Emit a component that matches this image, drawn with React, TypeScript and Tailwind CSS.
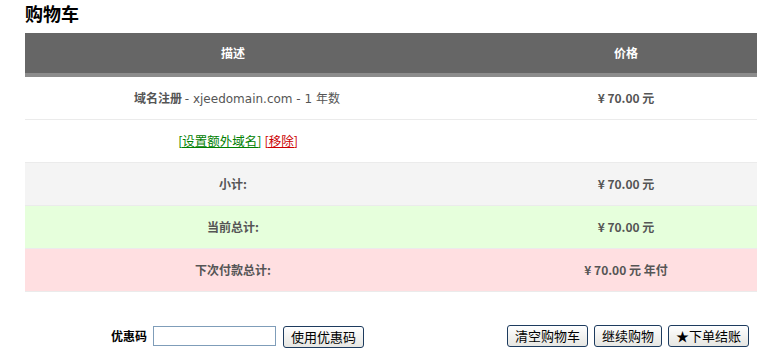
const cjk = { fontFamily: '"Noto Sans CJK SC", "Liberation Sans", sans-serif' };
const latin = { fontFamily: 'Verdana, "DejaVu Sans", "Noto Sans CJK SC", sans-serif' };

function Btn({ children }: { children: React.ReactNode }) {
  return (
    <button
      className="h-[22px] shrink-0 whitespace-nowrap rounded-[3px] border border-[#1d3b5e] bg-gradient-to-b from-white to-[#e6e6e2] px-[7px] text-[13px] leading-[20px] text-black"
      style={cjk}
    >
      {children}
    </button>
  );
}

function Row({
  left,
  right,
  bg = "bg-white",
}: {
  left: React.ReactNode;
  right?: React.ReactNode;
  bg?: string;
}) {
  return (
    <div className={`flex h-[43px] items-center border-b border-[#ebebeb] text-[12px] text-[#555] ${bg}`}>
      <div className="flex w-[416px] items-center justify-center">{left}</div>
      <div className="flex flex-1 items-center justify-center font-bold">{right}</div>
    </div>
  );
}

export default function App() {
  return (
    <div className="h-[353px] w-[757px] overflow-hidden bg-white" style={cjk}>
      <div className="w-[811px] pl-[25px]">
        <h1 className="h-[33px] pt-[1px] text-[18px] font-bold leading-[24px] text-black">购物车</h1>
        <div className="w-[786px]">
          <div className="flex h-[44px] items-center border-b-[4px] border-[#8c8c8c] bg-[#666666] text-[12px] font-bold text-white">
            <div className="w-[416px] text-center">描述</div>
            <div className="flex-1 text-center">价格</div>
          </div>
          <Row
            left={
              <span className="pl-[8px]">
                <b>域名注册</b> <span style={latin}>- xjeedomain.com - 1 </span>年数
              </span>
            }
            right={<span>¥ 70.00 元</span>}
          />
          <Row
            left={
              <span className="pl-[10px] text-[12.5px]">
                <a className="text-[#008000] underline" href="#">[设置额外域名]</a>{" "}
                <a className="text-[#cc0000] underline" href="#">[移除]</a>
              </span>
            }
          />
          <Row bg="bg-[#f4f4f4]" left={<b>小计:</b>} right={<span>¥ 70.00 元</span>} />
          <Row bg="bg-[#e6ffdc]" left={<b>当前总计:</b>} right={<span>¥ 70.00 元</span>} />
          <Row bg="bg-[#ffdfe1]" left={<b>下次付款总计:</b>} right={<span>¥ 70.00 元 年付</span>} />
        </div>
      </div>
      <div className="mt-[31px] flex w-[757px] items-center whitespace-nowrap">
        <div className="ml-[111px] flex shrink-0 items-center">
          <span className="shrink-0 text-[12px] font-bold text-black">优惠码</span>
          <input className="ml-[6px] h-[20px] w-[123px] shrink-0 border border-[#7f9db9] bg-white" />
          <span className="ml-[7px] shrink-0">
            <Btn>使用优惠码</Btn>
          </span>
        </div>
        <div className="ml-auto mr-[8px] flex shrink-0 items-center gap-[6px]">
          <Btn>清空购物车</Btn>
          <Btn>继续购物</Btn>
          <Btn>★下单结账</Btn>
        </div>
      </div>
    </div>
  );
}
